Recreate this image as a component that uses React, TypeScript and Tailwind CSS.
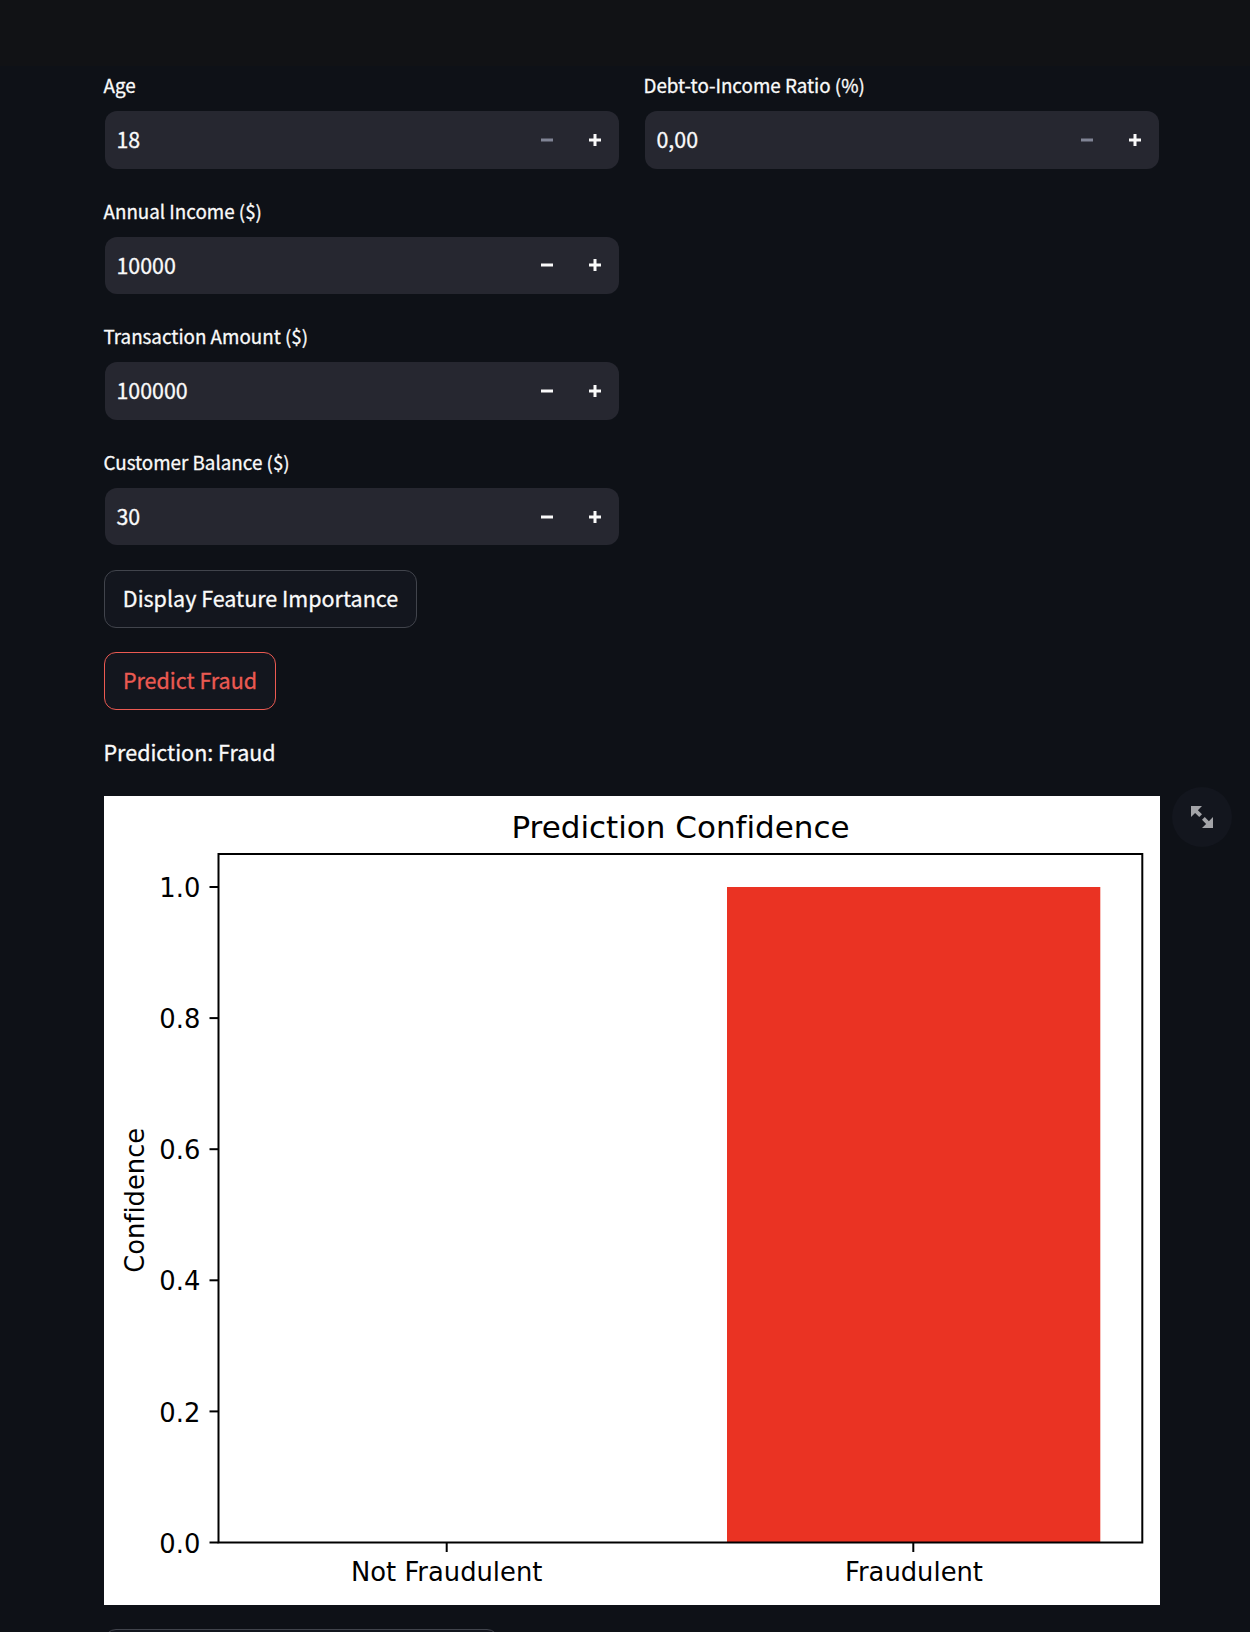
import React from "react";

type FieldProps = {
  label: string;
  value: string;
  minusDisabled?: boolean;
};

function Minus({ disabled }: { disabled?: boolean }) {
  return (
    <svg viewBox="0 0 8 8" className={disabled ? "size-3 fill-[#808495]" : "size-3 fill-[#fafafa]"}>
      <path d="M0 3v2h8v-2h-8z" />
    </svg>
  );
}

function Plus() {
  return (
    <svg viewBox="0 0 8 8" className="size-3 fill-[#fafafa]">
      <path d="M3 0v3h-3v2h3v3h2v-3h3v-2h-3v-3h-2z" />
    </svg>
  );
}

function NumberField({ label, value, minusDisabled }: FieldProps) {
  return (
    <div className="h-[125.67px]">
      <div className="-ml-[0.5px] h-[37px] text-[18.8px] leading-[21px] whitespace-nowrap">{label}</div>
      <div className="mx-px flex h-[57.5px] items-center rounded-xl bg-[#262730] pl-[11.5px]">
        <span className="flex-1 pb-[2px] text-[21.4px] leading-none">{value}</span>
        <button className="flex h-full w-12 items-center justify-center">
          <Minus disabled={minusDisabled} />
        </button>
        <button className="flex h-full w-12 items-center justify-center">
          <Plus />
        </button>
      </div>
    </div>
  );
}

const TICKS = ["0.0", "0.2", "0.4", "0.6", "0.8", "1.0"];

function ConfidenceChart() {
  return (
    <svg
      viewBox="0 0 1056 809"
      className="block h-[809px] w-[1056px] bg-white font-['DejaVu_Sans'] text-black [-webkit-text-stroke:0px] [font-variant-ligatures:none]"
    >
      <rect x="623" y="91" width="373.3" height="655.5" fill="#ea3323" />
      <rect x="114.5" y="58" width="923.8" height="688.5" fill="none" stroke="#000" strokeWidth="2" />
      {TICKS.map((t, i) => (
        <g key={t}>
          <line x1="105.5" x2="114.5" y1={746.5 - i * 131.1} y2={746.5 - i * 131.1} stroke="#000" strokeWidth="2" />
          <text x="96.3" y={756.6 - i * 131.1} textAnchor="end" fontSize="25.8">
            {t}
          </text>
        </g>
      ))}
      <line x1="342.7" x2="342.7" y1="746.5" y2="756" stroke="#000" strokeWidth="2" />
      <line x1="809.3" x2="809.3" y1="746.5" y2="756" stroke="#000" strokeWidth="2" />
      <text x="342.7" y="785" textAnchor="middle" fontSize="25.8">Not Fraudulent</text>
      <text x="810" y="785" textAnchor="middle" fontSize="25.8">Fraudulent</text>
      <text x="576.5" y="42.4" textAnchor="middle" fontSize="31">Prediction Confidence</text>
      <text transform="translate(39.5 404.3) rotate(-90)" textAnchor="middle" fontSize="25.8">Confidence</text>
    </svg>
  );
}

export default function App() {
  return (
    <div className="h-[1632px] overflow-hidden bg-[#0e1117] font-['Noto_Sans_CJK_SC',sans-serif] text-[#fafafa] [-webkit-text-stroke:0.3px]">
      <header className="h-[66px] bg-[#111215]" />
      <main className="ml-[104px] w-[1056px] pt-2">
        <div className="grid grid-cols-2 gap-x-6">
          <div>
            <NumberField label="Age" value="18" minusDisabled />
            <NumberField label="Annual Income ($)" value="10000" />
            <NumberField label="Transaction Amount ($)" value="100000" />
            <NumberField label="Customer Balance ($)" value="30" />
          </div>
          <NumberField label="Debt-to-Income Ratio (%)" value="0,00" minusDisabled />
        </div>
        <div className="-mt-[6.7px] flex flex-col items-start gap-6">
          <button className="h-[58px] w-[313px] rounded-xl border border-[#41444c] bg-[#13161e] pb-[2px] text-[21.5px] whitespace-nowrap">
            Display Feature Importance
          </button>
          <button className="h-[58px] w-[172px] rounded-xl border border-[#eb5a52] bg-[#13161e] pb-[2px] text-[21.5px] whitespace-nowrap text-[#eb5a52]">
            Predict Fraud
          </button>
          <p className="-ml-[0.5px] h-[38px] text-[21.5px] leading-[36px]">Prediction: Fraud</p>
          <div className="relative">
            <ConfidenceChart />
            <button className="absolute top-[-9px] left-[1068px] flex size-[60px] items-center justify-center rounded-full bg-[#13161e]">
              <svg viewBox="0 0 8 8" className="size-[22px] fill-[#a3a4a8]">
                <path d="M0 0v4l1.5-1.5 1.5 1.5 1-1-1.5-1.5 1.5-1.5h-4zm5 4l-1 1 1.5 1.5-1.5 1.5h4v-4l-1.5 1.5-1.5-1.5z" />
              </svg>
            </button>
          </div>
          <button className="h-[58px] w-[395px] rounded-xl border border-[#41444c] bg-[#13161e]" />
        </div>
      </main>
    </div>
  );
}
